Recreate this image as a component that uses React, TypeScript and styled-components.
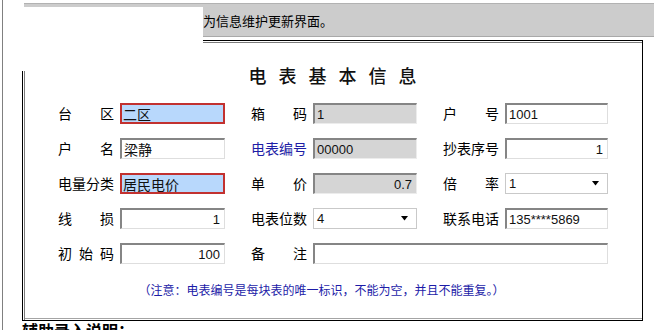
import React from "react";
import styled, { createGlobalStyle } from "styled-components";

const GlobalStyle = createGlobalStyle`
  html, body { margin: 0; padding: 0; background: #fff; }
  body { font-family: "Noto Sans CJK SC", "Liberation Sans", sans-serif; color: #000; }
`;

const Page = styled.div`
  position: relative;
  width: 654px;
  height: 330px;
  overflow: hidden;
  box-sizing: border-box;
  padding-left: 2px;
`;

const Frame = styled.div`
  height: 100%;
  border-left: 1px solid #808080;
  padding-top: 3px;
  box-sizing: border-box;
  display: flex;
  flex-direction: column;
  & > * { flex: none; }
`;

const HeaderBar = styled.div`
  margin-left: 21px;
  height: 34px;
  box-sizing: border-box;
  background: #cccccc;
  border-top: 1px solid #b2b2b2;
  border-bottom: 1px solid #a9a9a9;
  display: flex;
  align-items: center;
  padding-left: 179px;
  font-size: 13px;
  color: #000;
`;

const Redaction = styled.div<{ $x: number; $y: number; $w: number; $h: number }>`
  position: absolute;
  left: ${(p) => p.$x}px;
  top: ${(p) => p.$y}px;
  width: ${(p) => p.$w}px;
  height: ${(p) => p.$h}px;
  background: #fff;
`;

const Panel = styled.div`
  margin-top: 3px;
  margin-left: 19px;
  width: 621px;
  height: 281px;
  box-sizing: border-box;
  border: 1px solid #000;
  box-shadow: inset 1px 1px 0 #fff, inset 2px 2px 0 #7c7c7c, inset 0 -1px 0 #fff,
    inset 0 -2px 0 #a4a4a4;
  padding: 24px 35px 0 35px;
  display: flex;
  flex-direction: column;
`;

const Title = styled.div`
  display: flex;
  justify-content: center;
  gap: 12px;
  font-size: 18px;
  line-height: 20px;
  font-weight: 500;
  color: #111;
`;

const FormGrid = styled.div`
  margin-top: 18px;
  display: grid;
  grid-template-columns: 167px 166px 165px;
  grid-auto-rows: 21px;
  column-gap: 26px;
  row-gap: 14px;
`;

const Field = styled.div<{ $span?: boolean }>`
  display: grid;
  grid-template-columns: 56px 1fr;
  column-gap: 6px;
  align-items: center;
  ${(p) => (p.$span ? "grid-column: 2 / 4;" : "")}
`;

const Label = styled.div<{ $blue?: boolean }>`
  display: flex;
  justify-content: space-between;
  font-size: 14px;
  line-height: 21px;
  color: ${(p) => (p.$blue ? "#1e1ea6" : "#000")};
`;

type Variant = "plain" | "required" | "gray" | "select";

const Box = styled.div<{ $variant: Variant; $right?: boolean }>`
  height: 21px;
  box-sizing: border-box;
  display: flex;
  align-items: center;
  justify-content: ${(p) => (p.$right ? "flex-end" : "space-between")};
  padding: 0 4px 0 2px;
  font-family: "Liberation Sans", "Noto Sans CJK SC", sans-serif;
  font-size: 13px;
  color: #111;
  white-space: nowrap;
  ${(p) =>
    p.$variant === "required"
      ? `background: #b8d8fc; border: 2px solid #c2312f; padding-left: 1px; font-size: 14px; font-family: "Noto Sans CJK SC", sans-serif;`
      : p.$variant === "gray"
      ? `background: #d5d5d5; border-style: solid; border-width: 2px 1px 1px 2px; border-color: #858585 #ececec #ececec #858585;`
      : p.$variant === "select"
      ? `background: #fff; border: 1px solid #c9c9c9; padding: 0 7px 0 3px;`
      : `background: #fff; border-style: solid; border-width: 2px 1px 1px 2px; border-color: #858585 #dedede #dedede #858585;`}
`;

const Cjk = styled.span`
  font-family: "Noto Sans CJK SC", sans-serif;
  font-size: 14px;
`;

const Note = styled.div`
  margin-top: 18px;
  text-align: center;
  font-size: 12px;
  line-height: 16px;
  color: #1c1ca8;
  padding-right: 22px;
`;

const FooterTitle = styled.div`
  margin-left: 19px;
  font-size: 16px;
  line-height: 18px;
  font-weight: 700;
`;

const Arrow = () => (
  <svg width="8" height="5" viewBox="0 0 8 5">
    <path d="M0 0 H7 L3.5 4.5 Z" fill="#000" />
  </svg>
);

const LabelText = ({ text, blue }: { text: string; blue?: boolean }) => (
  <Label $blue={blue}>
    {text.split("").map((c, i) => (
      <span key={i}>{c}</span>
    ))}
  </Label>
);

type FieldDef = {
  label: string;
  value: string;
  variant: Variant;
  right?: boolean;
  blue?: boolean;
  cjk?: boolean;
  span?: boolean;
};

const fields: FieldDef[] = [
  { label: "台区", value: "二区", variant: "required" },
  { label: "箱码", value: "1", variant: "gray" },
  { label: "户号", value: "1001", variant: "plain" },
  { label: "户名", value: "梁静", variant: "plain", cjk: true },
  { label: "电表编号", value: "00000", variant: "gray", blue: true },
  { label: "抄表序号", value: "1", variant: "plain", right: true },
  { label: "电量分类", value: "居民电价", variant: "required" },
  { label: "单价", value: "0.7", variant: "gray", right: true },
  { label: "倍率", value: "1", variant: "select" },
  { label: "线损", value: "1", variant: "plain", right: true },
  { label: "电表位数", value: "4", variant: "select" },
  { label: "联系电话", value: "135****5869", variant: "plain" },
  { label: "初始码", value: "100", variant: "plain", right: true },
  { label: "备注", value: "", variant: "plain", span: true },
];

export default function App() {
  return (
    <>
      <GlobalStyle />
      <Page>
        <Frame>
          <HeaderBar>为信息维护更新界面。</HeaderBar>
          <Panel>
            <Title>
              {"电表基本信息".split("").map((c, i) => (
                <span key={i}>{c}</span>
              ))}
            </Title>
            <FormGrid>
              {fields.map((f, i) => (
                <Field key={i} $span={f.span}>
                  <LabelText text={f.label} blue={f.blue} />
                  <Box $variant={f.variant} $right={f.right}>
                    {f.cjk ? <Cjk>{f.value}</Cjk> : <span>{f.value}</span>}
                    {f.variant === "select" && <Arrow />}
                  </Box>
                </Field>
              ))}
            </FormGrid>
            <Note>（注意：电表编号是每块表的唯一标识，不能为空，并且不能重复。）</Note>
          </Panel>
          <FooterTitle>辅助录入说明：</FooterTitle>
        </Frame>
        <Redaction $x={20} $y={7} $w={183} $h={37} />
        <Redaction $x={20} $y={44} $w={8} $h={27} />
      </Page>
    </>
  );
}
